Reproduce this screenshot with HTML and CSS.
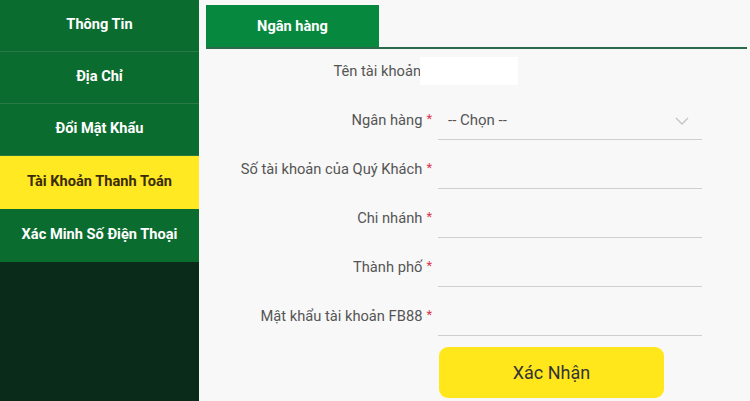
FILE: index.html
```html
<!DOCTYPE html>
<html lang="vi">
<head>
<meta charset="utf-8">
<title>Tài Khoản Thanh Toán</title>
<link rel="stylesheet" href="styles.css">
</head>
<body>
<div class="page">
  <nav class="sidebar">
    <a class="nav-item">Thông Tin</a>
    <a class="nav-item">Địa Chỉ</a>
    <a class="nav-item">Đổi Mật Khẩu</a>
    <a class="nav-item active">Tài Khoản Thanh Toán</a>
    <a class="nav-item">Xác Minh Số Điện Thoại</a>
  </nav>
  <main class="main">
    <div class="tabs">
      <div class="tab">Ngân hàng</div>
    </div>
    <form class="form">
      <div class="row row-name">
        <label class="label">Tên tài khoản</label>
        <span class="value-box"></span>
      </div>
      <div class="row">
        <label class="label">Ngân hàng<span class="req">*</span></label>
        <div class="field select">
          <span class="select-text">-- Chọn --</span>
          <svg class="chev" width="14" height="8" viewBox="0 0 14 8"><polyline points="1,1 7,7 13,1" fill="none" stroke="#c4c4c4" stroke-width="1.3"/></svg>
        </div>
      </div>
      <div class="row">
        <label class="label">Số tài khoản của Quý Khách<span class="req">*</span></label>
        <div class="field"></div>
      </div>
      <div class="row">
        <label class="label">Chi nhánh<span class="req">*</span></label>
        <div class="field"></div>
      </div>
      <div class="row">
        <label class="label">Thành phố<span class="req">*</span></label>
        <div class="field"></div>
      </div>
      <div class="row">
        <label class="label">Mật khẩu tài khoản FB88<span class="req">*</span></label>
        <div class="field"></div>
      </div>
      <div class="row row-btn">
        <span></span>
        <button type="button" class="submit">Xác Nhận</button>
      </div>
    </form>
  </main>
</div>
</body>
</html>
```
FILE: styles.css
```css
* { box-sizing: border-box; }
html, body { margin: 0; padding: 0; }
body {
  font-family: Roboto, "Noto Sans", "Liberation Sans", sans-serif;
  background: #f8f8f8;
  width: 750px;
  height: 401px;
  overflow: hidden;
}
.page {
  display: flex;
  height: 401px;
}
.sidebar {
  width: 199px;
  flex: none;
  background: #0b2b1a;
  display: flex;
  flex-direction: column;
}
.nav-item {
  height: 52px;
  display: flex;
  align-items: center;
  justify-content: center;
  background: #0b6c2f;
  color: #fff;
  font-weight: 700;
  font-size: 14.6px;
  border-bottom: 1px solid #2a7a47;
  padding-bottom: 3px;
}
.nav-item.active {
  background: #ffe923;
  color: #3a2c05;
  border-bottom-color: #ffe923;
  height: 53px;
}
.nav-item:last-child {
  border-bottom: 1px solid #0b6c2f;
  height: 53px;
}
.main {
  flex: 1;
  padding: 5px 3px 0 7px;
}
.tabs {
  display: flex;
  border-bottom: 2px solid #2c6b4a;
}
.tab {
  width: 173px;
  height: 42px;
  background: #06893f;
  color: #fff;
  font-weight: 700;
  font-size: 14.6px;
  display: flex;
  align-items: center;
  justify-content: center;
}
.form {
  display: flex;
  flex-direction: column;
  gap: 9px;
  padding-top: 8px;
}
.row {
  display: grid;
  grid-template-columns: 226px 264px;
  column-gap: 6px;
  height: 40px;
  align-items: center;
}
.row-name {
  height: 28px;
  margin-bottom: 6px;
}
.label {
  text-align: right;
  padding-right: 11px;
  font-size: 14.7px;
  color: #555;
  white-space: nowrap;
}
.req {
  color: #d9374b;
  font-size: 13px;
  padding-left: 4px;
  margin-right: -11px;
  position: relative;
  top: -2px;
}
.value-box {
  display: block;
  width: 98px;
  height: 28px;
  background: #fff;
  margin-left: -18px;
}
.field {
  height: 40px;
  border-bottom: 1px solid #cfcfcf;
}
.select {
  display: flex;
  align-items: center;
  justify-content: space-between;
  padding: 0 13px 0 10px;
}
.select-text {
  font-size: 15px;
  color: #555;
}
.chev { display: block; margin-top: 2px; }
.row-btn {
  height: 51px;
  margin-top: 2px;
}
.submit {
  width: 225px;
  height: 51px;
  margin-left: 1px;
  background: #ffe71c;
  border: none;
  border-radius: 9px;
  font-family: Roboto, "Noto Sans", "Liberation Sans", sans-serif;
  font-size: 18px;
  color: #333;
}
```
